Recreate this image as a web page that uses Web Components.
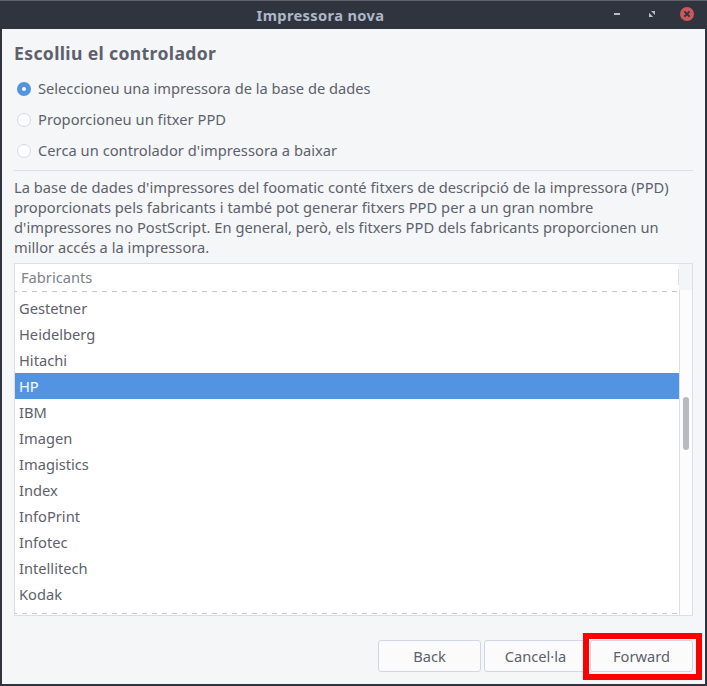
<!DOCTYPE html>
<html lang="ca">
<head>
<meta charset="utf-8">
<title>Impressora nova</title>
<style>
html,body{margin:0;height:100%;overflow:hidden}
body{font-family:"Noto Sans",sans-serif;font-size:14.667px;line-height:20px;color:#5c616c;background:#2f343f}
</style>
</head>
<body>
<printer-window></printer-window>
<script>
const define = (name, html, setup) => customElements.define(name, class extends HTMLElement {
  connectedCallback() {
    if (this.shadowRoot) return;
    this.attachShadow({mode: 'open'}).innerHTML = html;
    if (setup) setup(this, this.shadowRoot);
  }
});

define('title-bar', `<style>
:host{display:grid;grid-template-columns:66px 1fr 100px;height:29px;box-sizing:border-box;border-top:1px solid #5d626b;background:#2f343f;color:#afb8c6;margin:0 -2px}
.t{grid-column:2;text-align:center;font-weight:700;font-size:14.667px;letter-spacing:.35px;line-height:28px;white-space:nowrap;padding-right:32px}
svg{display:block;width:100px;height:28px;grid-column:3}
</style><div class="t"><slot></slot></div>
<svg viewBox="607 1 100 28">
<rect x="614" y="13" width="6" height="2" fill="#b8bdc7"/>
<path d="M651 11h4v4zM649 12.8v4.2h4.2z" fill="#b8bdc7"/>
<circle cx="687" cy="14" r="7" fill="#cc575d"/>
<path d="M684.4 11.4l5.2 5.2m0-5.2l-5.2 5.2" stroke="#2f343f" stroke-width="2"/>
</svg>`);

define('radio-option', `<style>
:host{display:flex;align-items:center;gap:7px;height:31px;padding-left:3px;white-space:nowrap}
i{display:block;box-sizing:border-box;width:14px;height:14px;margin-top:1px;border:1px solid #d3d8e6;border-radius:50%;background:#fff}
:host([checked]) i{border:5px solid #5294e2}
span{margin-bottom:1px}
</style><i></i><span><slot></slot></span>`);

define('list-row', `<style>
:host{display:block;height:26px;line-height:26px;padding-left:4px;box-sizing:border-box}
:host([selected]){background:#5294e2;color:#fff}
</style><slot></slot>`);

define('maker-list', `<style>
:host{display:grid;grid-template-columns:664px 13px;height:353px;width:679px;box-sizing:border-box;border:1px solid #dcdfe3;background:#fff}
.main{display:flex;flex-direction:column}
.head{height:27px;line-height:27px;padding:0 0 0 6px;color:#7c818a;background:linear-gradient(#dcdfe3,#dcdfe3) 663px 5px/1px 16px no-repeat}
.dash{height:1px;background:repeating-linear-gradient(90deg,#c8c8c8 0 2px,transparent 2px 7px,#c8c8c8 7px 10px)}
.rows{height:321px;padding-top:3px;box-sizing:border-box;overflow:hidden}
.bar{display:flex;flex-direction:column}
.corner{height:26px;background:#f4f5f7}
.track{flex:1;border-left:1px solid #dcdfe3;background:#fcfcfc;padding:107px 3px 0}
.thumb{width:6px;height:53px;border-radius:3px;background:#b8babf}
</style>
<div class="main"><div class="head">Fabricants</div><div class="dash"></div><div class="rows"><slot></slot></div><div class="dash"></div></div>
<div class="bar"><div class="corner"></div><div class="track"><div class="thumb"></div></div></div>`);

define('push-button', `<style>
:host{display:block;position:relative;box-sizing:border-box;width:103px;height:32px;line-height:30px;border:1px solid #cfd6e6;border-radius:3px;background:#fbfbfc;text-align:center;white-space:nowrap;font-variant-ligatures:none}
:host([highlight])::after{content:"";position:absolute;left:-8px;top:-8px;width:107px;height:35px;border:6px solid #f00}
</style><slot></slot>`);

define('printer-window', `<style>
:host{display:flex;flex-direction:column;box-sizing:border-box;width:707px;height:686px;padding:0 2px 2px;background:#2f343f}
main{flex:1;background:#f5f6f7;padding:0 12px;display:flex;flex-direction:column}
h1{font-size:17.6px;letter-spacing:.35px;line-height:24px;margin:12px 0 8px;font-weight:700;white-space:nowrap}
.opts{height:98px;box-sizing:border-box;border-bottom:1px solid #dcdfe3}
.wide{letter-spacing:.04px}
p{margin:6px 0;line-height:20px;white-space:nowrap;letter-spacing:.032px}
.actions{display:flex;justify-content:flex-end;gap:3px;margin-top:24px}
</style>
<title-bar>Impressora nova</title-bar>
<main><h1>Escolliu el controlador</h1>
<div class="opts">
<radio-option checked>Seleccioneu una impressora de la base de dades</radio-option>
<radio-option class="wide">Proporcioneu un fitxer PPD</radio-option>
<radio-option class="wide">Cerca un controlador d'impressora a baixar</radio-option></div>
<p>La base de dades d'impressores del foomatic conté fitxers de descripció de la impressora (PPD)<br>proporcionats pels fabricants i també pot generar fitxers PPD per a un gran nombre<br>d'impressores no PostScript. En general, però, els fitxers PPD dels fabricants proporcionen un<br>millor accés a la impressora.</p>
<maker-list></maker-list>
<div class="actions" lang="en"><push-button>Back</push-button><push-button>Cancel·la</push-button><push-button highlight>Forward</push-button></div>
</main>`, (host, root) => {
  const list = root.querySelector('maker-list');
  for (const name of ['Gestetner','Heidelberg','Hitachi','HP','IBM','Imagen','Imagistics','Index','InfoPrint','Infotec','Intellitech','Kodak']) {
    const row = document.createElement('list-row');
    row.textContent = name;
    if (name === 'HP') row.setAttribute('selected', '');
    list.append(row);
  }
});
</script>
</body>
</html>
